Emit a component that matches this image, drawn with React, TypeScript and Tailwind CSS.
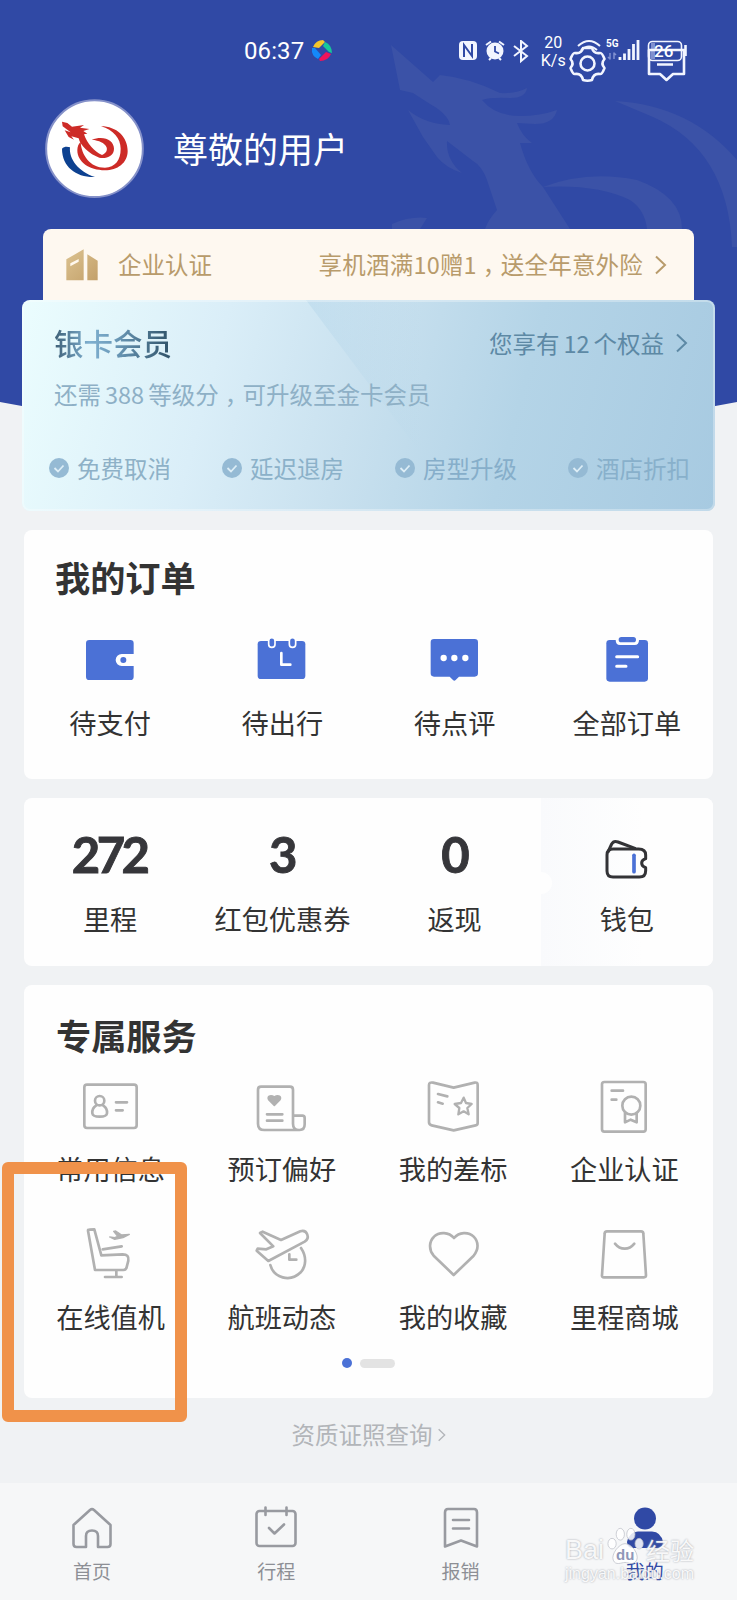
import React from 'react';

interface IconItem {
    label: string;
    icon: React.ReactNode;
}

const CJK = "font-['Noto_Sans_CJK_SC',sans-serif]";

// half-width cell with even margins, so the mark sits near the middle
const Comma: React.FC = () => <span className="mx-[6px] [font-feature-settings:'halt']">，</span>;

const Chevron: React.FC<{ className?: string }> = ({ className }) => (
    <svg className={className} viewBox="0 0 12 20" fill="none" stroke="currentColor" strokeWidth="2">
        <path d="M1 1.5 L10 10 L1 18.5" />
    </svg>
);

const orders: IconItem[] = [
    {
        label: '待支付',
        icon: (
            <svg width="60" height="48" viewBox="240 315 180 144">
                <path
                    fill="#4b71d6"
                    d="M268 330 H391 Q401 330 401 340 V372 H365 A18 18 0 0 0 365 408 H401 V440 Q401 450 391 450 H268 Q258 450 258 440 V340 Q258 330 268 330Z"
                />
                <circle cx="370" cy="390" r="9" fill="#4b71d6" />
            </svg>
        ),
    },
    {
        label: '待出行',
        icon: (
            <svg width="60" height="48" viewBox="757 315 180 144">
                <rect x="774" y="333" width="143" height="114" rx="10" fill="#4b71d6" />
                <rect x="807" y="323" width="19" height="29" rx="9.5" fill="#4b71d6" stroke="#fff" strokeWidth="5" />
                <rect x="869" y="323" width="19" height="29" rx="9.5" fill="#4b71d6" stroke="#fff" strokeWidth="5" />
                <path d="M845 369 V404 H872" fill="none" stroke="#fff" strokeWidth="8" strokeLinecap="round" strokeLinejoin="round" />
            </svg>
        ),
    },
    {
        label: '待点评',
        icon: (
            <svg width="60" height="48" viewBox="164 315 180 144">
                <path
                    fill="#4b71d6"
                    d="M191 327 H313 Q323 327 323 337 V430 Q323 440 313 440 H266 L256 450 Q252 454 248 450 L238 440 H191 Q181 440 181 430 V337 Q181 327 191 327Z"
                />
                <circle cx="220" cy="384" r="9.5" fill="#fff" />
                <circle cx="252" cy="384" r="9.5" fill="#fff" />
                <circle cx="285" cy="384" r="9.5" fill="#fff" />
            </svg>
        ),
    },
    {
        label: '全部订单',
        icon: (
            <svg width="60" height="48" viewBox="681 315 180 144">
                <rect x="709" y="330" width="125" height="125" rx="10" fill="#4b71d6" />
                <path d="M737 329 H807 Q807 345 794 345 H750 Q737 345 737 329Z" fill="#fff" />
                <rect x="746" y="321" width="52" height="16" rx="8" fill="#4b71d6" />
                <path d="M740 380 H803 M740 409 H768" stroke="#fff" strokeWidth="9" strokeLinecap="round" />
            </svg>
        ),
    },
];

const line = {
    width: 60,
    height: 60,
    fill: 'none',
    stroke: '#b1b1b1',
    strokeWidth: 8,
    strokeLinecap: 'round',
    strokeLinejoin: 'round',
} as const;

const services: IconItem[] = [
    {
        label: '常用信息',
        icon: (
            <svg {...line} viewBox="246 290 180 180">
                <rect x="256" y="313" width="157" height="130" rx="8" />
                <circle cx="302" cy="361" r="14" />
                <path d="M291 376 C283 381 279 389 280 399 C281 406 286 409 302 409 C318 409 323 406 324 399 C325 389 321 381 313 376" />
                <path d="M351 366 H384 M351 390 H371" />
            </svg>
        ),
    },
    {
        label: '预订偏好',
        icon: (
            <svg {...line} viewBox="759 290 180 180">
                <path d="M882 406 V328 Q882 319 873 319 H786 Q777 319 777 328 V430 Q777 449 796 449 H902 Q917 449 917 432 V413 Q917 406 910 406 H882 V430 Q882 449 900 449" />
                <path d="M804 402 H850 M804 421 H850" />
                <path d="M826 375 L809 358 C804 350 813 342 826 350 C839 342 848 350 843 358Z" fill="#b1b1b1" stroke="#b1b1b1" strokeWidth="5" />
            </svg>
        ),
    },
    {
        label: '我的差标',
        icon: (
            <svg {...line} viewBox="162 290 180 180">
                <path d="M192 307 L254 322 L317 307 Q326 305 326 314 V428 Q326 434 320 435 L254 450 L188 435 Q180 433 180 426 V314 Q180 305 192 307Z" />
                <path d="M207 341 L235 348 M207 366 L221 370" />
                <path d="M284 352 L291 368 L308 371 L295 383 L299 402 L284 393 L268 402 L271 383 L257 371 L276 368Z" strokeWidth="7" />
            </svg>
        ),
    },
    {
        label: '企业认证',
        icon: (
            <svg {...line} viewBox="676 290 180 180">
                <rect x="700" y="305" width="131" height="149" rx="7" />
                <path d="M729 331 H763 M729 358 H743" />
                <circle cx="788" cy="376" r="27" />
                <path d="M769 398 V426 L786 418 L804 426 V398" />
            </svg>
        ),
    },
    {
        label: '在线值机',
        icon: (
            <svg {...line} viewBox="247 735 180 180">
                <path d="M268 752 Q268 749 272 749 L287 748 L308 826 L372 823 Q392 823 389 842 L383 865 Q381 870 374 870 H289Z" />
                <path d="M312 808 L369 799 M353 872 V889 M319 891 H369" />
                <path d="M333 771 L348 773 L357 769 L345 754 L351 753 L369 765 L392 763 L373 773 L348 778Z" fill="#b1b1b1" strokeWidth="4" />
            </svg>
        ),
    },
    {
        label: '航班动态',
        icon: (
            <svg {...line} viewBox="759 735 180 180">
                <path d="M808 843 L773 812 L776 806 L802 808 L823 799 L783 759 L791 755 L846 780 L904 754 C925 748 934 774 917 785Z" />
                <path d="M906 804 C924 831 921 858 906 876 C872 910 824 892 814 855" />
                <path d="M871 823 V839 H892" />
            </svg>
        ),
    },
    {
        label: '我的收藏',
        icon: (
            <svg {...line} viewBox="162 735 180 180">
                <path d="M254 885 L194 827 C178 808 181 783 195 770 C211 754 240 756 255 774 C270 756 298 754 314 770 C329 785 330 808 314 827Z" />
            </svg>
        ),
    },
    {
        label: '里程商城',
        icon: (
            <svg {...line} viewBox="676 735 180 180">
                <path d="M715 754 H817 Q824 754 824 761 L832 886 Q832 892 826 892 H706 Q699 892 700 886 L708 761 Q708 754 715 754Z" />
                <path d="M739 791 Q751 806 768 806 Q785 806 797 791" />
            </svg>
        ),
    },
];

const balances = [
    { value: '272', label: '里程' },
    { value: '3', label: '红包优惠券' },
    { value: '0', label: '返现' },
];

const benefits = [
    { label: '免费取消', tone: 'text-[#8eb1c7]' },
    { label: '延迟退房', tone: 'text-[#8bb1c9]' },
    { label: '房型升级', tone: 'text-[#86aeca]' },
    { label: '酒店折扣', tone: 'text-[#88b0cb]' },
];

const tabs: IconItem[] = [
    {
        label: '首页',
        icon: (
            <svg width="44" height="44" viewBox="0 0 44 44" fill="none" stroke="#989aa0" strokeWidth="2.6" strokeLinejoin="round">
                <path d="M3.500 19 L20 4 Q22 2.400 24 4 L40.500 19 V38 Q40.500 41 37.500 41 H28 V30 Q28 24.500 22 24.500 Q16 24.500 16 30 V41 H6.500 Q3.500 41 3.500 38Z" />
            </svg>
        ),
    },
    {
        label: '行程',
        icon: (
            <svg width="44" height="44" viewBox="0 0 44 44" fill="none" stroke="#989aa0" strokeWidth="2.6" strokeLinecap="round" strokeLinejoin="round">
                <rect x="2.500" y="5" width="39" height="35" rx="3" />
                <path d="M11.500 1.500 V9 M32.500 1.500 V9 M15 22 L20.500 27.500 L30 18.500" />
            </svg>
        ),
    },
    {
        label: '报销',
        icon: (
            <svg width="44" height="44" viewBox="0 0 44 44" fill="none" stroke="#989aa0" strokeWidth="2.6" strokeLinecap="round" strokeLinejoin="round">
                <path d="M9 3 H35 Q38 3 38 6.500 V40.500 L22 34.500 L6 40.500 V6.500 Q6 3 9 3Z" />
                <path d="M14 14 H30 M14 22.500 H30" />
            </svg>
        ),
    },
    {
        label: '我的',
        icon: (
            <svg width="44" height="44" viewBox="0 0 44 44" fill="#3049a5">
                <circle cx="22" cy="12.500" r="11" />
                <path d="M4 36 Q6 26 15 25.500 H29 Q38 26 40 36 Q40 42 34 42 H10 Q4 42 4 36Z" />
            </svg>
        ),
    },
];

const HeaderBackdrop: React.FC = () => (
    <svg className="absolute left-0 top-0" width="737" height="420" viewBox="0 0 737 420">
        <path d="M0 0 H737 V402 Q370 475 0 402Z" fill="#3049a5" />
        <g fill="#3b52a7">
            <path d="M391 45 L433 82 L440 75 Q470 78 500 93 Q515 94 527 88 Q526 98 510 98 Q490 97 482 100 Q495 116 520 116 Q540 116 557 110 Q554 124 535 124 L517 123 Q522 136 532 143 L520 143 Q528 172 543 187 L570 229 H485 Q488 220 497 210 L487 180 Q482 166 473 161 L447 141 Q446 160 462 173 Q446 168 437 157 L423 137 L408 110 Q425 124 450 125 Q448 114 430 104 L413 93 L400 90Z" />
            <path d="M543 187 Q587 170 637 180 Q682 196 682 229 H647 Q645 210 630 200 Q597 184 543 187Z" />
            <path d="M615 101 Q690 105 737 160 V247 L732 247 Q728 150 653 117Z" />
            <path d="M392 224 Q410 216 427 218 L420 229 H392Z" />
        </g>
    </svg>
);

const StatusBar: React.FC = () => (
    <div className="relative flex h-[99px] items-start pl-[244px] pt-[36px] text-white">
        <span className="font-['Roboto',sans-serif] text-[24px] leading-[30px] tracking-[0.1px]">06:37</span>
        <svg className="ml-[7px] mt-[3px]" width="22" height="23" viewBox="0 0 22 23">
            <path d="M2 8 Q5 1 12 1 L14 3 L8 9Z" fill="#f6c62b" />
            <path d="M14 3 Q21 6 21 14 L18 13 L12 7Z" fill="#17c79a" />
            <path d="M20 15 Q17 22 9 22 L8 20 L15 13Z" fill="#f0145a" />
            <path d="M1 9 Q0 17 7 20 L10 16 L4 9Z" fill="#1488fa" />
        </svg>
        <svg className="ml-[125px] mt-[4px]" width="74" height="24" viewBox="0 0 74 24">
            <rect x="1" y="1" width="18" height="19" rx="4" fill="#f2f5ff" />
            <path d="M6 17 V5 L14 16 V4" fill="none" stroke="#3049a5" strokeWidth="2" />
            <circle cx="37" cy="11" r="8.500" fill="#f2f5ff" />
            <path d="M37 6 V11.500 L41 13.500" fill="none" stroke="#3049a5" strokeWidth="1.800" />
            <path d="M28 5 L33 1.500 M46 5 L41 1.500 M31 20 L33 18 M43 20 L41 18" stroke="#f2f5ff" strokeWidth="2" />
            <path d="M56 6 L69 16 L63 21 V1 L69 6 L56 16" fill="none" stroke="#f2f5ff" strokeWidth="2" />
        </svg>
        <div className="ml-[6px] -mt-[2px] w-[30px] text-center font-['Roboto',sans-serif] text-[16px] leading-[18px]">
            <div>20</div>
            <div>K/s</div>
        </div>
        <svg className="absolute left-[565px] top-[34px]" width="125" height="52" viewBox="565 34 125 52" fill="none" stroke="#f2f5ff" strokeLinejoin="round">
            <path d="M578 46 Q589 36 600 46 M581 50 Q589 43 597 50" strokeWidth="2" />
            <path
                strokeWidth="2.600"
                d="M583 48 H592 Q593.500 54 600 53 Q602 52.500 604.500 59 Q600.500 63.500 604.500 68 Q602 74.500 600 74 Q593.500 73 592 80 Q587.500 81.500 583 80 Q581.500 73 575 74 Q573 74.500 570.500 68 Q574.500 63.500 570.500 59 Q573 52.500 575 53 Q581.500 54 583 48Z"
            />
            <circle cx="587.500" cy="63.500" r="7" strokeWidth="2.600" />
            <path d="M620 60 V57 M624.500 60 V53.500 M629 60 V49 M633.500 60 V44 M638 60 V40" strokeWidth="2.800" />
            <path d="M610 53 V59 L608 57 M614 59 V53 L616 55" stroke="#8090d0" strokeWidth="1.500" />
            <rect x="648.500" y="41.500" width="33" height="19" rx="4" strokeWidth="1.600" />
            <path d="M651 43 H655 V59 H651Z" fill="#8090cf" stroke="none" />
            <path d="M685.500 45 V56" strokeWidth="2.600" />
            <path d="M649 50 H684 V74 H673 L666.500 80 L660 74 H649Z M657 64.500 H673" strokeWidth="2.600" />
        </svg>
        <span className="absolute left-[606px] top-[38px] font-['Roboto',sans-serif] text-[10px] font-bold leading-[12px]">5G</span>
        <span className="absolute left-[654px] top-[41px] font-['Roboto',sans-serif] text-[17px] font-medium leading-[20px]">26</span>
    </div>
);

const Profile: React.FC = () => (
    <div className="relative flex h-[98px] items-center pl-[45px]">
        <svg width="99" height="99" viewBox="135 56 297 297">
            <circle cx="283.500" cy="205" r="145" fill="#fff" stroke="#8591c9" strokeWidth="6" />
            <g fill="#cd2b27">
                <path d="M186 124 L202 128 L216 139 L252 134 L240 142 L268 146 L250 152 L262 160 L252 162 C262 190 282 214 306 224 C334 212 322 182 275 178 C312 164 342 180 342 205 C342 228 318 236 298 232 C268 222 240 195 236 174 L214 168 L222 178 L206 170 L194 150 L212 156 L188 138Z" />
                <path d="M303 138 C350 138 383 170 383 212 C383 248 352 270 315 270 C268 270 232 245 232 210 C232 198 236 190 242 184 C244 224 270 262 315 262 C345 260 362 240 362 205 C362 175 340 148 303 138Z" />
            </g>
            <path d="M186 205 C192 198 203 199 210 201 C206 235 235 275 285 290 C230 292 186 260 186 205Z" fill="#0d4190" />
        </svg>
        <span className="ml-[29px] text-[35px] leading-[48px] text-white">尊敬的用户</span>
    </div>
);

const MemberCard: React.FC = () => (
    <div className="relative mx-[22px] h-[211px] overflow-hidden rounded-[8px] bg-[linear-gradient(105deg,#ebfdfe_0%,#daeef8_28%,#c9e1ef_48%,#b4d4e7_70%,#a7cae1_100%)] pt-[2px]">
        <svg className="absolute left-0 top-0" width="400" height="211" viewBox="0 0 400 211">
            <defs>
                <linearGradient id="shine" x1="0" y1="0" x2="1" y2="0">
                    <stop offset="0" stopColor="#a9cfe6" stopOpacity="0.350" />
                    <stop offset="1" stopColor="#a9cfe6" stopOpacity="0" />
                </linearGradient>
            </defs>
            <path d="M284 0 H400 V155 Z" fill="url(#shine)" />
        </svg>
        <div className="absolute inset-0 rounded-[8px] border-2 border-white/30" />
        <div className="relative flex h-[60px] items-end justify-between pl-[32px] pr-[27px]">
            <h2 className="bg-[linear-gradient(90deg,#3e6077_0%,#7fb0d0_30%,#6d9cbb_50%,#2f5167_100%)] bg-clip-text text-[29.500px] font-medium leading-[40px] text-transparent">
                银卡会员
            </h2>
            <div className="flex items-center text-[23.500px] leading-[38px] text-[#5d89a5]">
                您享有<span className="mx-[4px]">12</span>个权益
                <Chevron className="ml-[12px] h-[20px] w-[12px]" />
            </div>
        </div>
        <p className="relative mt-[14px] pl-[32px] text-[23.500px] leading-[36px] text-[#8eb0c6]">
            还需<span className="mx-[4px]">388</span>等级分<Comma />可升级至金卡会员
        </p>
        <div className="relative mt-[38px] flex pl-[27px]">
            {benefits.map((b) => (
                <div key={b.label} className={`flex w-[173px] shrink-0 items-center ${b.tone}`}>
                    <svg width="20" height="20" viewBox="0 0 20 20">
                        <circle cx="10" cy="10" r="10" fill="#95bad4" />
                        <path d="M5.500 10 L9 13.500 L14.500 7.500" fill="none" stroke="#dcedf6" strokeWidth="1.800" />
                    </svg>
                    <span className="ml-[8px] text-[23.500px] leading-[36px]">{b.label}</span>
                </div>
            ))}
        </div>
    </div>
);

const Watermark: React.FC = () => (
    <div className="absolute left-[565px] top-[1530px] w-[135px] font-['Liberation_Sans',sans-serif] text-white/90 [text-shadow:0_0_2px_#999ca5]">
        <div className="flex items-center text-[27px] leading-[40px]">
            <span>Bai</span>
            <div className="relative -mt-[8px] h-[40px] w-[42px]">
                <svg width="42" height="40" viewBox="0 0 34 34" fill="#fff" fillOpacity="0.850" stroke="#b9bcc4" strokeWidth="0.600">
                    <ellipse cx="6" cy="15" rx="3.500" ry="4.500" />
                    <ellipse cx="13" cy="7" rx="3.500" ry="5" />
                    <ellipse cx="22" cy="7" rx="3.500" ry="5" />
                    <ellipse cx="29" cy="15" rx="3.500" ry="4.500" />
                    <path d="M17 15 C23 15 29 24 27 29 C24 34 20 31 17 31 C14 31 9 34 7 29 C5 24 12 15 17 15Z" />
                </svg>
                <span className="absolute left-[12px] top-[21px] text-[15px] font-bold leading-[16px] text-[#8f97b8] [text-shadow:none]">du</span>
            </div>
            <span className="font-['Noto_Sans_CJK_SC',sans-serif] text-[24px]">经验</span>
        </div>
        <div className="-mt-[4px] text-[16px] leading-[16px]">jingyan.baidu.com</div>
    </div>
);

export default function App() {
    return (
        <div className={`relative h-[1600px] w-[737px] overflow-hidden bg-[#f0f2f4] text-[#333] ${CJK}`}>
            <HeaderBackdrop />
            <StatusBar />
            <Profile />

            <div className="relative mx-[43px] mt-[32px] flex h-[71px] items-center rounded-t-[8px] bg-[#fef8f0] pl-[23px] pr-[27px] text-[23.500px] text-[#b89b6b]">
                <svg width="33" height="32" viewBox="200 506 99 96">
                    <defs>
                        <linearGradient id="gold" x1="0" y1="0" x2="1" y2="1">
                            <stop offset="0" stopColor="#dcc391" />
                            <stop offset="1" stopColor="#c3a06a" />
                        </linearGradient>
                    </defs>
                    <path d="M201 537 L253 507 V600 H201Z M264 522 L295 541 V600 H264Z" fill="url(#gold)" />
                    <path d="M213 549 L238 536 V544 L213 558Z" fill="#fff8ee" />
                </svg>
                <span className="ml-[19px]">企业认证</span>
                <span className="ml-auto tracking-[0.200px]">
                    享机酒满10赠1<Comma />送全年意外险
                </span>
                <Chevron className="ml-[12px] h-[20px] w-[12px]" />
            </div>

            <MemberCard />

            <section className="mx-[24px] mt-[19px] h-[249px] rounded-[8px] bg-[#fefefe] pt-[23px]">
                <h2 className="pl-[31px] text-[35.200px] font-bold leading-[48px]">我的订单</h2>
                <div className="mt-[34px] grid grid-cols-4">
                    {orders.map((o) => (
                        <div key={o.label} className="flex flex-col items-center">
                            {o.icon}
                            <span className="mt-[21px] text-[27.200px] leading-[36px]">{o.label}</span>
                        </div>
                    ))}
                </div>
            </section>

            <section className="relative mx-[24px] mt-[19px] grid h-[168px] grid-cols-4 overflow-hidden rounded-[8px] bg-[#fefefe]">
                {balances.map((b) => (
                    <div key={b.label} className="flex flex-col items-center pt-[31px]">
                        <span className="pr-[2px] font-['Lato',sans-serif] text-[49px] font-bold leading-[50px] tracking-[-3.500px] text-[#36363a] [-webkit-text-stroke:0.900px_#36363a]">
                            {b.value}
                        </span>
                        <span className="mt-[21px] text-[27.200px] leading-[36px]">{b.label}</span>
                    </div>
                ))}
                <div className="flex flex-col items-center bg-[linear-gradient(90deg,#f9fafc,#fefefe_60%)] pt-[37px]">
                    <svg width="50" height="50" viewBox="696 135 150 150" fill="none" stroke="#333336" strokeWidth="9" strokeLinejoin="round">
                        <path d="M729 177 H806 Q827 177 827 195 V206 Q815 210 815 219 Q815 229 827 233 V242 Q827 261 808 261 H729 Q711 261 711 243 V195 Q711 177 729 177Z" />
                        <path d="M713 188 L725 162 Q731 151 744 156 L797 176" />
                        <path d="M792 196 V245" stroke="#4b71d6" strokeWidth="11" strokeLinecap="round" />
                    </svg>
                    <span className="mt-[15px] text-[27.200px] leading-[36px]">钱包</span>
                </div>
                <span className="absolute left-[512px] top-[74px] h-[22px] w-[16px] rounded-r-full bg-[#fefefe]" />
            </section>

            <section className="mx-[24px] mt-[19px] h-[413px] rounded-[8px] bg-[#fefefe] pt-[26px]">
                <h2 className="pl-[32px] text-[35.200px] font-bold leading-[48px]">专属服务</h2>
                <div className="ml-[1px] mr-[3px] mt-[18px] grid grid-cols-4 gap-y-[39.500px]">
                    {services.map((s) => (
                        <div key={s.label} className="flex flex-col items-center">
                            {s.icon}
                            <span className="mt-[12.500px] text-[27.200px] leading-[36px]">{s.label}</span>
                        </div>
                    ))}
                </div>
                <div className="mt-[24.500px] flex items-center justify-center gap-[8px]">
                    <span className="h-[10px] w-[10px] rounded-full bg-[#4b71d6]" />
                    <span className="h-[9px] w-[35px] rounded-full bg-[#e3e3e3]" />
                </div>
            </section>

            <div className="flex h-[85px] items-center justify-center pb-[11px] text-[23.500px] text-[#b2b5b9]">
                资质证照查询
                <Chevron className="ml-[5px] h-[14px] w-[8px]" />
            </div>

            <nav className="grid h-[117px] grid-cols-4 bg-[#f6f7f8] pt-[23px]">
                {tabs.map((t) => (
                    <div key={t.label} className="flex flex-col items-center">
                        {t.icon}
                        <span className={`mt-[7px] text-[19px] leading-[28px] ${t.label === '我的' ? 'text-[#3049a5]' : 'text-[#8d8f95]'}`}>
                            {t.label}
                        </span>
                    </div>
                ))}
            </nav>

            <Watermark />

            {/* highlight around online check-in */}
            <div className="absolute left-[2px] top-[1162px] h-[260px] w-[185px] rounded-[6px] border-[12px] border-[#f0924a]" />
        </div>
    );
}
